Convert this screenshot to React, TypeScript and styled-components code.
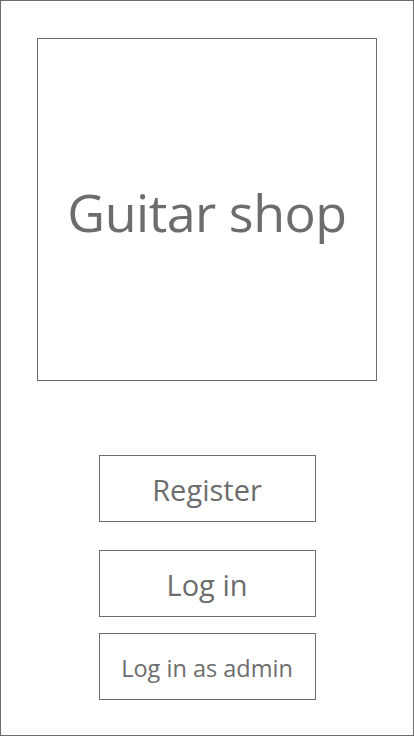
import styled, { createGlobalStyle } from "styled-components";

const GlobalStyle = createGlobalStyle`
  html, body {
    margin: 0;
    padding: 0;
    background: white;
  }
`;

export default function App() {
  return (
    <>
      <GlobalStyle />
      <Frame>
        <Logo>
          <LogoText>Guitar shop</LogoText>
        </Logo>
        <Actions>
          <ActionButton>Register</ActionButton>
          <ActionButton $spaced>Log in</ActionButton>
          <ActionButton $small>Log in as admin</ActionButton>
        </Actions>
      </Frame>
    </>
  );
}

const Frame = styled.div`
  box-sizing: border-box;
  width: 414px;
  height: 736px;
  border: 1px solid #6d6d6d;
  display: flex;
  flex-direction: column;
  align-items: center;
  padding-top: 37px;
  font-family: "Open Sans", "Noto Sans", sans-serif;
  color: #6d6d6d;
`;

const Logo = styled.div`
  box-sizing: border-box;
  width: 340px;
  height: 343px;
  border: 1px solid #6d6d6d;
  display: flex;
  align-items: center;
  justify-content: center;
  padding-top: 4px;
`;

const LogoText = styled.span`
  font-size: 52px;
  letter-spacing: -0.5px;
`;

const Actions = styled.div`
  margin-top: 74px;
  display: flex;
  flex-direction: column;
  align-items: center;
`;

const ActionButton = styled.button<{ $small?: boolean; $spaced?: boolean }>`
  box-sizing: border-box;
  width: 217px;
  height: 67px;
  margin-top: ${(p) => (p.$spaced ? "28px" : p.$small ? "16px" : "0")};
  border: 1px solid #6d6d6d;
  background: white;
  font-family: inherit;
  color: #6d6d6d;
  font-size: ${(p) => (p.$small ? "23.5px" : "29px")};
  padding: 2px 0 0;
  cursor: pointer;
`;
